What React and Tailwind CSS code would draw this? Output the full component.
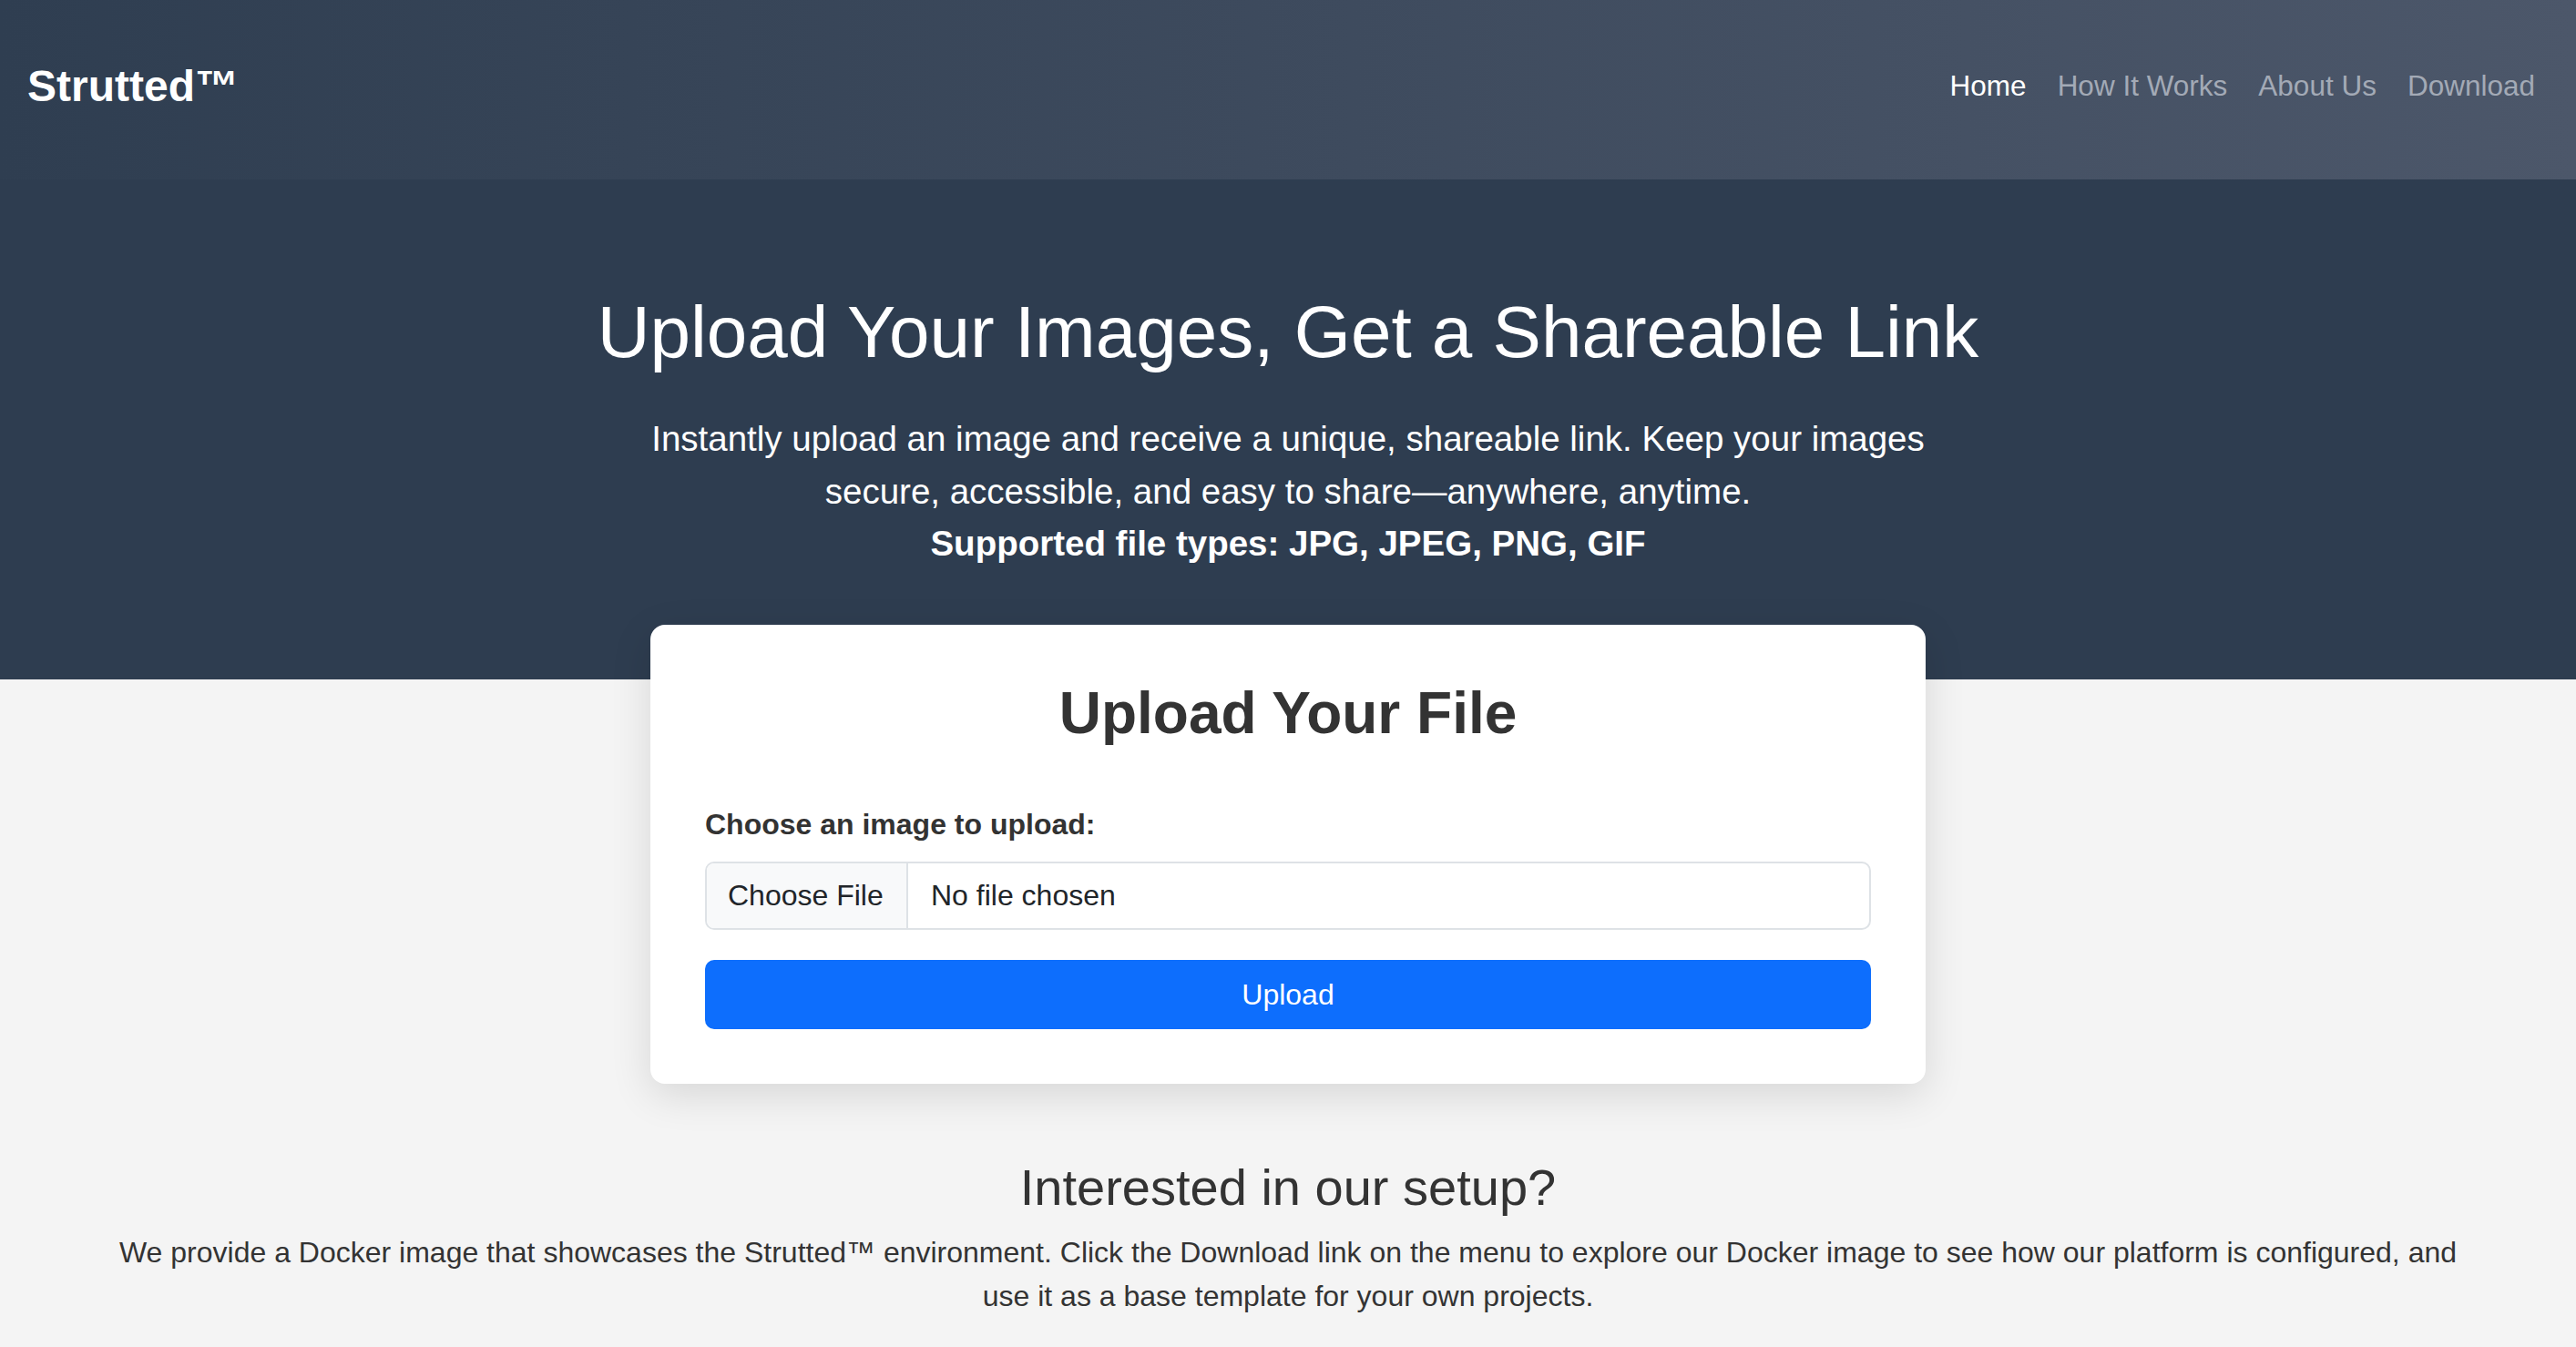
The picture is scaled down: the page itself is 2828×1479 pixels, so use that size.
const links = [
  { label: "Home", active: true },
  { label: "How It Works" },
  { label: "About Us" },
  { label: "Download" },
];

export default function App() {
  return (
    <div className="min-h-screen bg-[#f4f4f4] font-['Liberation_Sans',Arial,sans-serif] text-[#333]">
      <header className="h-[197px] flex items-center justify-between pl-[30px] pr-[45px] pb-[8px] bg-linear-to-r from-[#2f3e51] to-[#4c576a]">
        <a href="#" className="text-white text-[48px] font-bold leading-none">
          Strutted™
        </a>
        <nav className="flex items-center gap-[34px] text-[31.5px] leading-none">
          {links.map((l) => (
            <a
              key={l.label}
              href="#"
              className={l.active ? "text-white" : "text-[#a3aab6]"}
            >
              {l.label}
            </a>
          ))}
        </nav>
      </header>

      <section className="bg-[#2e3d50] text-white text-center pt-[120px] pb-[120px]">
        <h1 className="text-[80px] leading-[1.2] font-normal">
          Upload Your Images, Get a Shareable Link
        </h1>
        <p className="mt-[40px] mx-auto max-w-[1450px] text-[38.5px] leading-[57.7px]">
          Instantly upload an image and receive a unique, shareable link. Keep your images
          secure, accessible, and easy to share—anywhere, anytime.
          <br />
          <strong className="font-bold">Supported file types: JPG, JPEG, PNG, GIF</strong>
        </p>
      </section>

      <main className="relative z-10 -mt-[60px] w-[1400px] mx-auto bg-white rounded-[16px] p-[60px] shadow-[0_12px_45px_rgba(0,0,0,0.12)]">
        <h2 className="text-center text-[64px] font-bold leading-[1.18] text-[#333] mb-[59px]">
          Upload Your File
        </h2>
        <label className="block text-[32px] font-bold leading-[1.5] text-[#333] mb-[17px]">
          Choose an image to upload:
        </label>
        <div className="flex h-[75px] border-2 border-[#dee2e6] rounded-[10px] overflow-hidden text-[32px] text-[#212529]">
          <span className="flex items-center w-[221px] px-[23px] bg-[#f8f9fa] border-r-2 border-[#dee2e6]">
            Choose File
          </span>
          <span className="flex items-center pl-[25px]">No file chosen</span>
        </div>
        <button className="mt-[33px] w-full h-[76px] bg-[#0d6efd] text-white text-[32px] rounded-[10px]">
          Upload
        </button>
      </main>

      <section className="mt-[80px] pb-[40px] text-center px-[24px]">
        <h3 className="text-[56px] leading-[1.2] font-normal text-[#333] mb-[14px]">
          Interested in our setup?
        </h3>
        <p className="mx-auto max-w-[2590px] text-[32px] leading-[1.5] text-[#333]">
          We provide a Docker image that showcases the Strutted™ environment. Click the Download
          link on the menu to explore our Docker image to see how our platform is configured, and
          use it as a base template for your own projects.
        </p>
      </section>
    </div>
  );
}
